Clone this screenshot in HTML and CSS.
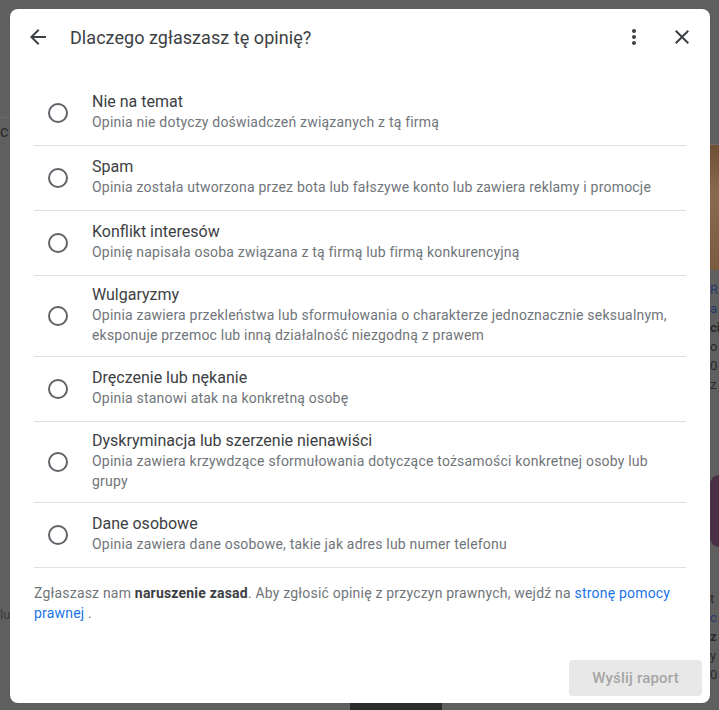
FILE: index.html
```html
<!DOCTYPE html>
<html lang="pl">
<head>
<meta charset="utf-8">
<title>Dlaczego zgłaszasz tę opinię?</title>
<link rel="stylesheet" href="styles.css">
</head>
<body>
<div class="backdrop">
  <div class="bd-left">
    <div class="bd-left-top"></div>
    <div class="bd-letter">c</div>
    <div class="bd-spacer"></div>
    <div class="bd-letter small">lu</div>
  </div>
  <div class="bd-mid">
    <div class="bd-spacer"></div>
    <div class="bd-bottom"><div class="bd-photo-dark"></div></div>
  </div>
  <div class="bd-right">
    <div class="bd-r1"></div>
    <div class="bd-photo"></div>
    <div class="bd-text">
      <span class="blue">R</span><span class="blue">a</span><b>ci</b><span>o</span><span>0</span><span>z</span>
    </div>
    <div class="bd-purple"></div>
    <div class="bd-text2"><span>t</span><span class="blue">c</span><b>z</b><span>y</span><span>0</span></div>
  </div>
</div>

<div class="dialog" role="dialog" aria-label="Dlaczego zgłaszasz tę opinię?">
  <div class="header">
    <button class="icon-btn" aria-label="Wstecz">
      <svg viewBox="0 0 24 24" width="24" height="24"><path d="M20 11H7.83l5.59-5.59L12 4l-8 8 8 8 1.41-1.41L7.83 13H20v-2z"/></svg>
    </button>
    <div class="title">Dlaczego zgłaszasz tę opinię?</div>
    <button class="icon-btn" aria-label="Więcej">
      <svg viewBox="0 0 24 24" width="24" height="24"><path d="M12 8c1.1 0 2-.9 2-2s-.9-2-2-2-2 .9-2 2 .9 2 2 2zm0 2c-1.1 0-2 .9-2 2s.9 2 2 2 2-.9 2-2-.9-2-2-2zm0 6c-1.1 0-2 .9-2 2s.9 2 2 2 2-.9 2-2-.9-2-2-2z"/></svg>
    </button>
    <button class="icon-btn" aria-label="Zamknij">
      <svg viewBox="0 0 24 24" width="24" height="24"><path d="M19 6.41L17.59 5 12 10.59 6.41 5 5 6.41 10.59 12 5 17.59 6.41 19 12 13.41 17.59 19 19 17.59 13.41 12z"/></svg>
    </button>
  </div>

  <div class="list">
    <div class="row">
      <div class="radio-wrap"><span class="radio"></span></div>
      <div class="texts">
        <div class="r-title">Nie na temat</div>
        <div class="r-desc">Opinia nie dotyczy doświadczeń związanych z tą firmą</div>
      </div>
    </div>
    <div class="row">
      <div class="radio-wrap"><span class="radio"></span></div>
      <div class="texts">
        <div class="r-title">Spam</div>
        <div class="r-desc">Opinia została utworzona przez bota lub fałszywe konto lub zawiera reklamy i promocje</div>
      </div>
    </div>
    <div class="row">
      <div class="radio-wrap"><span class="radio"></span></div>
      <div class="texts">
        <div class="r-title">Konflikt interesów</div>
        <div class="r-desc">Opinię napisała osoba związana z tą firmą lub firmą konkurencyjną</div>
      </div>
    </div>
    <div class="row">
      <div class="radio-wrap"><span class="radio"></span></div>
      <div class="texts">
        <div class="r-title">Wulgaryzmy</div>
        <div class="r-desc">Opinia zawiera przekleństwa lub sformułowania o charakterze jednoznacznie seksualnym, eksponuje przemoc lub inną działalność niezgodną z prawem</div>
      </div>
    </div>
    <div class="row">
      <div class="radio-wrap"><span class="radio"></span></div>
      <div class="texts">
        <div class="r-title">Dręczenie lub nękanie</div>
        <div class="r-desc">Opinia stanowi atak na konkretną osobę</div>
      </div>
    </div>
    <div class="row">
      <div class="radio-wrap"><span class="radio"></span></div>
      <div class="texts">
        <div class="r-title">Dyskryminacja lub szerzenie nienawiści</div>
        <div class="r-desc">Opinia zawiera krzywdzące sformułowania dotyczące tożsamości konkretnej osoby lub grupy</div>
      </div>
    </div>
    <div class="row">
      <div class="radio-wrap"><span class="radio"></span></div>
      <div class="texts">
        <div class="r-title">Dane osobowe</div>
        <div class="r-desc">Opinia zawiera dane osobowe, takie jak adres lub numer telefonu</div>
      </div>
    </div>
  </div>

  <p class="note">Zgłaszasz nam <b>naruszenie zasad</b>. Aby zgłosić opinię z przyczyn prawnych, wejdź na <a href="#">stronę pomocy prawnej</a> .</p>

  <div class="actions">
    <button class="submit" disabled>Wyślij raport</button>
  </div>
</div>
</body>
</html>
```

FILE: styles.css
```css
* { box-sizing: border-box; }
html, body { margin: 0; padding: 0; }
body {
  width: 719px;
  height: 710px;
  overflow: hidden;
  background: #5f5f5f;
  font-family: Roboto, "Noto Sans", "Liberation Sans", Arial, sans-serif;
  position: relative;
}

/* dimmed page behind the dialog */
.backdrop {
  display: flex;
  height: 710px;
}
.bd-left {
  width: 10px;
  display: flex;
  flex-direction: column;
  color: #2a2a2a;
}
.bd-left-top {
  height: 118px;
  border-bottom: 1px solid #6a6a6a;
}
.bd-letter {
  font-size: 16px;
  line-height: 20px;
  margin-top: 4px;
}
.bd-letter.small { font-size: 13px; color: #3a3a3a; margin-bottom: 85px; }
.bd-spacer { flex: 1; }
.bd-mid {
  flex: 1;
  display: flex;
  flex-direction: column;
}
.bd-bottom {
  height: 7px;
  display: flex;
  padding-left: 340px;
}
.bd-photo-dark {
  width: 92px;
  background: #2b2b2b;
}
.bd-right {
  width: 9px;
  display: flex;
  flex-direction: column;
  color: #2a2a2a;
  font-size: 13px;
  line-height: 19px;
}
.bd-r1 {
  height: 145px;
  border-bottom: 1px solid #6d6d6d;
}
.bd-photo {
  height: 125px;
  background: linear-gradient(180deg, #6e4f33 0%, #8a6a4c 40%, #7b5b3f 100%);
}
.bd-text {
  height: 205px;
  display: flex;
  flex-direction: column;
  padding-top: 10px;
}
.bd-purple {
  height: 72px;
  background: #4a3044;
  border-radius: 12px 0 0 12px;
}
.bd-text2 {
  display: flex;
  flex-direction: column;
  padding-top: 42px;
}
.blue { color: #283a66; }

/* dialog */
.dialog {
  position: absolute;
  left: 10px;
  top: 9px;
  width: 700px;
  height: 694px;
  background: #fff;
  border-radius: 8px;
  display: flex;
  flex-direction: column;
}
.header {
  height: 56px;
  display: flex;
  align-items: center;
  padding: 0 4px;
  flex-shrink: 0;
}
.icon-btn {
  width: 48px;
  height: 48px;
  border: 0;
  background: transparent;
  padding: 0;
  display: flex;
  align-items: center;
  justify-content: center;
  fill: #3c4043;
}
.title {
  flex: 1;
  margin-left: 8px;
  font-size: 18px;
  color: #3c4043;
  letter-spacing: 0.05px;
}

.list {
  margin: 16px 24px 0;
}
.row {
  display: flex;
  align-items: center;
  min-height: 65px;
  padding: 9px 0 11px;
  border-bottom: 1px solid #e0e0e0;
}
.radio-wrap {
  width: 48px;
  display: flex;
  justify-content: center;
  flex-shrink: 0;
  margin-top: 2px;
}
.radio {
  width: 20px;
  height: 20px;
  border: 2px solid #5f6368;
  border-radius: 50%;
}
.texts {
  margin-left: 10px;
  flex: 1;
}
.r-title {
  font-size: 16px;
  line-height: 20px;
  color: #3c4043;
}
.r-desc {
  font-size: 14px;
  line-height: 20px;
  color: #70757a;
  letter-spacing: 0.2px;
}

.note {
  margin: 15px 24px 0;
  font-size: 14px;
  line-height: 20px;
  color: #70757a;
  letter-spacing: 0.2px;
}
.note b { color: #3c4043; font-weight: 700; }
.note a { color: #1a73e8; text-decoration: none; }

.actions {
  margin-top: auto;
  display: flex;
  justify-content: flex-end;
  padding: 0 8px 7px;
}
.submit {
  width: 133px;
  height: 36px;
  border: 0;
  border-radius: 4px;
  background: #e8e8e8;
  color: #a6a6a6;
  font-family: Roboto, "Noto Sans", "Liberation Sans", Arial, sans-serif;
  font-size: 15px;
  font-weight: 500;
  letter-spacing: 0.2px;
}
```
